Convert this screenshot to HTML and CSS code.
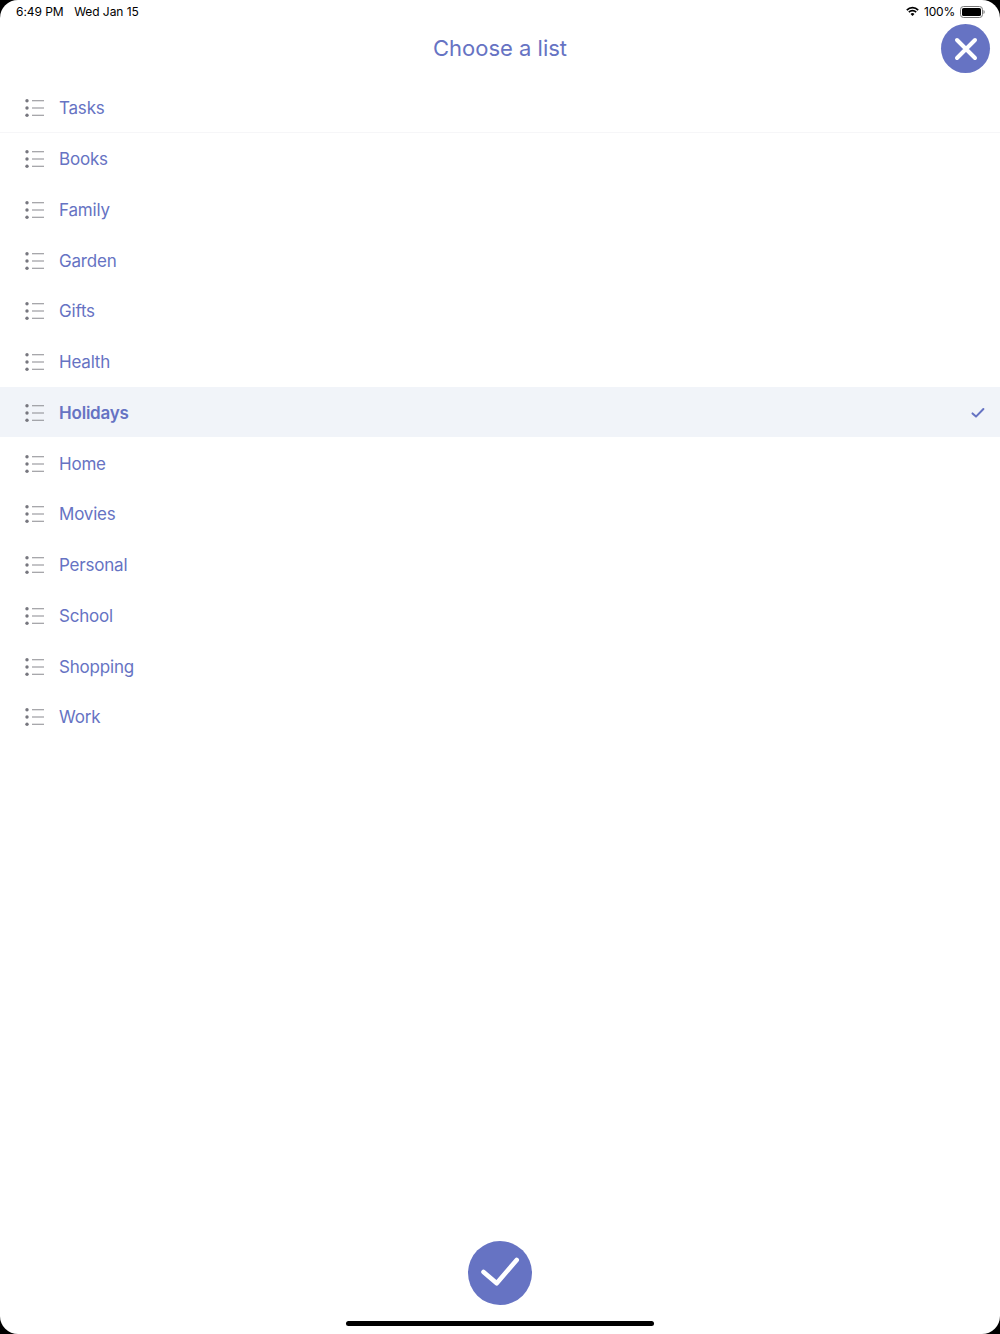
FILE: index.html
```html
<!DOCTYPE html>
<html lang="en">
<head>
<meta charset="utf-8">
<title>Choose a list</title>
<link rel="stylesheet" href="styles.css">
</head>
<body>
<div class="screen">
  <div class="status">
    <div class="status-left"><span>6:49 PM</span><span>Wed Jan 15</span></div>
    <div class="status-right">
      <svg class="wifi" width="13" height="11" viewBox="0 0 16 12"><path d="M1 4.200a10 10 0 0 1 14 0" fill="none" stroke="#000" stroke-width="2.100"/><path d="M3.500 6.800a6.400 6.400 0 0 1 9 0" fill="none" stroke="#000" stroke-width="2.100"/><path d="M8 11.600 5.600 9a3.400 3.400 0 0 1 4.800 0z" fill="#000"/></svg>
      <span class="pct">100%</span>
      <svg class="battery" width="25" height="12" viewBox="0 0 25 12"><rect x="0.500" y="0.500" width="22" height="11" rx="3" fill="none" stroke="#777"/><rect x="2" y="2" width="19" height="8" rx="1.600" fill="#000"/><path d="M23.500 4v4a2 2 0 0 0 1.200-2 2 2 0 0 0-1.200-2z" fill="#777"/></svg>
    </div>
  </div>
  <header class="header">
    <h1 class="title">Choose a list</h1>
    <button class="close" aria-label="Close">
      <svg width="24" height="24" viewBox="0 0 24 24"><path d="M3 3l18 18M21 3l-18 18" fill="none" stroke="#fff" stroke-width="4" stroke-linecap="round"/></svg>
    </button>
  </header>
  <ul class="list">
    <li class="row row-first"><svg class="lines" width="19" height="20" viewBox="0 0 19 20"><use href="#l"/></svg><span>Tasks</span></li>
    <li class="row"><svg class="lines" width="19" height="20" viewBox="0 0 19 20"><use href="#l"/></svg><span>Books</span></li>
    <li class="row"><svg class="lines" width="19" height="20" viewBox="0 0 19 20"><use href="#l"/></svg><span>Family</span></li>
    <li class="row"><svg class="lines" width="19" height="20" viewBox="0 0 19 20"><use href="#l"/></svg><span>Garden</span></li>
    <li class="row"><svg class="lines" width="19" height="20" viewBox="0 0 19 20"><use href="#l"/></svg><span>Gifts</span></li>
    <li class="row"><svg class="lines" width="19" height="20" viewBox="0 0 19 20"><use href="#l"/></svg><span>Health</span></li>
    <li class="row row-selected"><svg class="lines" width="19" height="20" viewBox="0 0 19 20"><use href="#l"/></svg><span>Holidays</span>
      <svg class="tick" width="14" height="12" viewBox="0 0 14 12"><path d="M1.500 6.400 5 9.600 12.400 2" fill="none" stroke="#6673c3" stroke-width="2" stroke-linecap="round" stroke-linejoin="round"/></svg></li>
    <li class="row"><svg class="lines" width="19" height="20" viewBox="0 0 19 20"><use href="#l"/></svg><span>Home</span></li>
    <li class="row"><svg class="lines" width="19" height="20" viewBox="0 0 19 20"><use href="#l"/></svg><span>Movies</span></li>
    <li class="row"><svg class="lines" width="19" height="20" viewBox="0 0 19 20"><use href="#l"/></svg><span>Personal</span></li>
    <li class="row"><svg class="lines" width="19" height="20" viewBox="0 0 19 20"><use href="#l"/></svg><span>School</span></li>
    <li class="row"><svg class="lines" width="19" height="20" viewBox="0 0 19 20"><use href="#l"/></svg><span>Shopping</span></li>
    <li class="row"><svg class="lines" width="19" height="20" viewBox="0 0 19 20"><use href="#l"/></svg><span>Work</span></li>
  </ul>
  <footer class="footer">
    <button class="confirm" aria-label="Confirm">
      <svg width="40" height="32" viewBox="0 0 40 32"><path d="M3.500 15 16.700 26.300 36.700 3" fill="none" stroke="#fff" stroke-width="4.600" stroke-linecap="round" stroke-linejoin="round"/></svg>
    </button>
    <div class="home-bar"></div>
  </footer>
</div>
<svg class="defs" width="0" height="0"><defs><g id="l"><circle cx="2" cy="2.800" r="1.700" fill="#77777f"/><circle cx="2" cy="10" r="1.700" fill="#77777f"/><circle cx="2" cy="17.200" r="1.700" fill="#77777f"/><path d="M7 2.800h12M7 10h12M7 17.200h12" stroke="#8a8a90" stroke-width="1.100" fill="none"/></g></defs></svg>
</body>
</html>
```
FILE: styles.css
```css
* { box-sizing: border-box; }
html, body { margin: 0; height: 100%; background: #000; }
body { font-family: Inter, "Liberation Sans", sans-serif; overflow: hidden; }
.screen {
  width: 1000px;
  height: 1334px;
  background: #fff;
  border-radius: 18px;
  overflow: hidden;
  display: flex;
  flex-direction: column;
  position: relative;
}
.status {
  height: 23px;
  padding: 0 15px 0 16px;
  display: flex;
  justify-content: space-between;
  align-items: center;
  font-size: 12px;
  color: #000;
  flex: none;
}
.status-left { display: flex; gap: 10.500px; letter-spacing: -0.05px; }
.status-right { display: flex; align-items: center; gap: 5px; }
.pct { letter-spacing: -0.2px; }
.header {
  height: 59.500px;
  flex: none;
  display: flex;
  justify-content: center;
  position: relative;
}
.title {
  margin: 0;
  padding-top: 10px;
  font-size: 22px;
  line-height: 30px;
  font-weight: 400;
  color: #6673c3;
}
.close {
  position: absolute;
  left: 941px;
  top: 1px;
  width: 49px;
  height: 49px;
  border: 0;
  padding: 0;
  border-radius: 50%;
  background: #6673c3;
  display: flex;
  align-items: center;
  justify-content: center;
}
.list { list-style: none; margin: 0; padding: 0; flex: none; }
.row {
  height: 50.750px;
  display: flex;
  align-items: center;
  padding: 1px 15px 0 25px;
  font-size: 17px;
  letter-spacing: -0.2px;
  color: #6673c3;
}
.row-first { border-bottom: 1px solid #f6f6f8; }
.row-selected { background: #f1f4f9; font-weight: 600; height: 50px; margin-bottom: 0.750px; }
.lines { flex: none; margin-right: 15px; }
.tick { margin-left: auto; flex: none; }
.footer {
  margin-top: auto;
  display: flex;
  flex-direction: column;
  align-items: center;
  padding-bottom: 8px;
}
.confirm {
  width: 64px;
  height: 64px;
  border: 0;
  padding: 0;
  border-radius: 50%;
  background: #6673c3;
  display: flex;
  align-items: center;
  justify-content: center;
  margin-bottom: 16px;
}
.home-bar { width: 308px; height: 5px; border-radius: 3px; background: #000; }
.defs { position: absolute; }
```
